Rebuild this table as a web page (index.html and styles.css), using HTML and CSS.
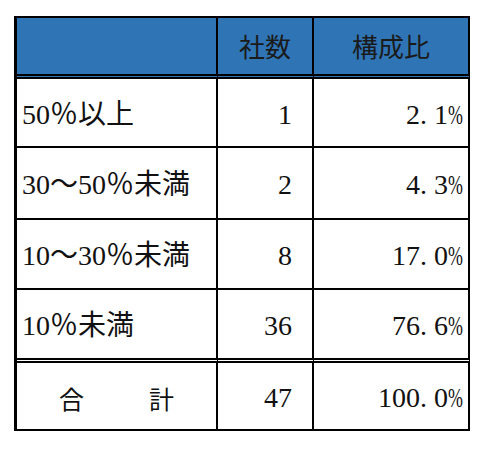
FILE: index.html
```html
<!DOCTYPE html>
<html lang="ja">
<head>
<meta charset="utf-8">
<link rel="stylesheet" href="styles.css">
</head>
<body>
<div class="table">
  <div class="cell head"></div>
  <div class="cell head center">社数</div>
  <div class="cell head center last">構成比</div>

  <div class="cell label">50％以上</div>
  <div class="cell num">1</div>
  <div class="cell pctcol last">2<span class="dot">.</span>1<span class="pc"><span class="pcg">%</span></span></div>

  <div class="cell label">30～50％未満</div>
  <div class="cell num">2</div>
  <div class="cell pctcol last">4<span class="dot">.</span>3<span class="pc"><span class="pcg">%</span></span></div>

  <div class="cell label">10～30％未満</div>
  <div class="cell num">8</div>
  <div class="cell pctcol last">17<span class="dot">.</span>0<span class="pc"><span class="pcg">%</span></span></div>

  <div class="cell label pre">10％未満</div>
  <div class="cell num pre">36</div>
  <div class="cell pctcol last pre">76<span class="dot">.</span>6<span class="pc"><span class="pcg">%</span></span></div>

  <div class="cell total"><span>合</span><span>計</span></div>
  <div class="cell num">47</div>
  <div class="cell pctcol last">100<span class="dot">.</span>0<span class="pc"><span class="pcg">%</span></span></div>
</div>
</body>
</html>
```

FILE: styles.css
```css
html, body {
  margin: 0;
  padding: 0;
  background: #ffffff;
}

body {
  padding: 16px 0 0 14px;
  font-family: "Liberation Serif", "Noto Sans CJK JP", serif;
  font-size: 28px;
  color: #111111;
}

.table {
  display: grid;
  grid-template-columns: 201px 96px 156px;
  grid-template-rows: 61px 69px 72px 70px 73px 68px;
  width: 456px;
  box-sizing: border-box;
  border-left: 3px solid #000;
  border-top: 2px solid #000;
}

.cell {
  box-sizing: border-box;
  border-right: 2px solid #000;
  border-bottom: 2px solid #000;
  display: flex;
  align-items: center;
  line-height: 1;
  white-space: nowrap;
  padding-top: 4px;
}

.head {
  background: #2f75b6;
  border-bottom: 5px double #000;
  color: #1a1a1a;
  font-family: "Noto Sans CJK JP", sans-serif;
  font-size: 26px;
  padding-top: 0;
}

.center {
  justify-content: center;
}

.label {
  padding-left: 5px;
  font-size: 28px;
}

.num {
  justify-content: flex-end;
  padding-right: 20px;
}

.pctcol {
  justify-content: flex-end;
  padding-right: 5px;
}

.pre {
  border-bottom: 5px double #000;
}

.total {
  justify-content: space-between;
  padding: 4px 42px 0 42px;
  font-family: "Noto Sans CJK JP", sans-serif;
  font-size: 25px;
}

.dot {
  display: inline-block;
  width: 14px;
}

.pc {
  display: inline-block;
  width: 15px;
  overflow: visible;
}

.pcg {
  display: inline-block;
  transform: scaleX(0.64);
  transform-origin: left center;
}
```
